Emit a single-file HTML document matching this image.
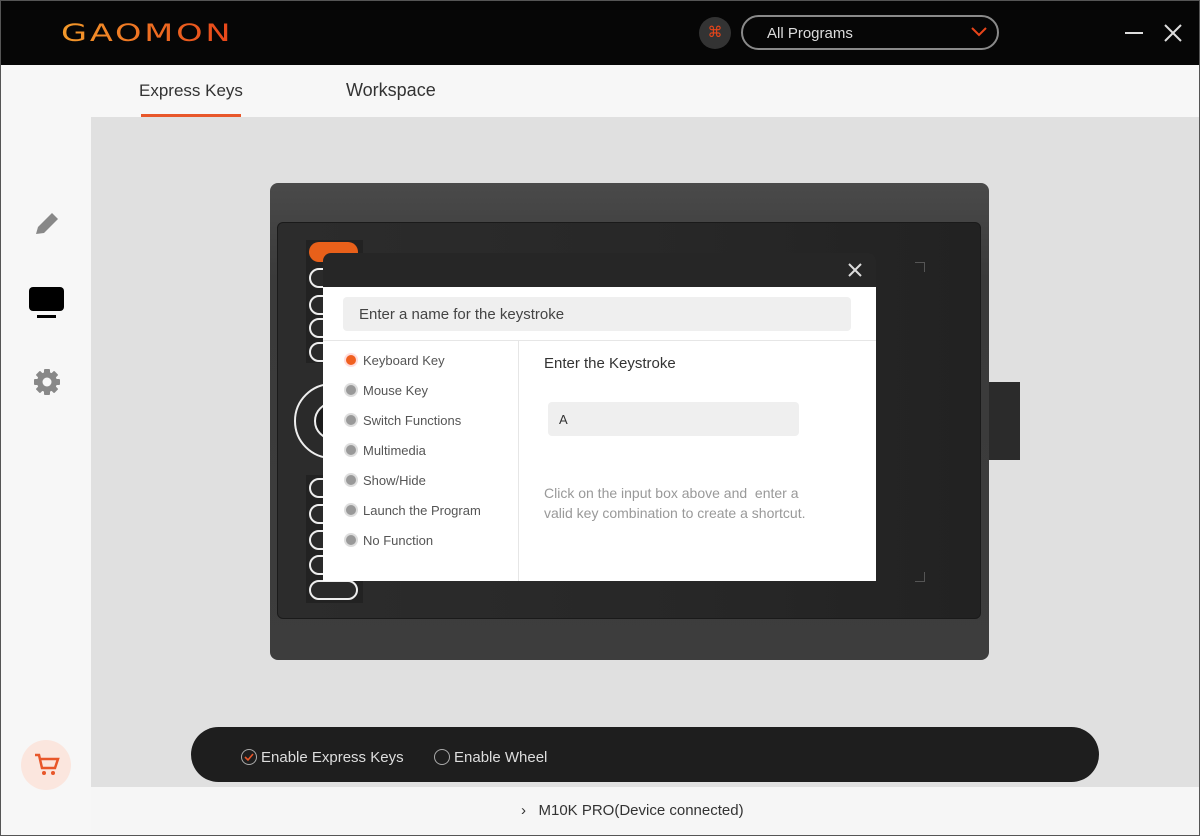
<!DOCTYPE html>
<html><head><meta charset="utf-8"><style>
*{margin:0;padding:0;box-sizing:border-box}
body{width:1200px;height:836px;overflow:hidden;font-family:"Liberation Sans",sans-serif;background:#f7f7f7;position:relative}
.a{position:absolute}
.top{left:0;top:0;width:1200px;height:65px;background:#060606}
.main{left:91px;top:117px;width:1109px;height:670px;background:#e0e0e0}
.status{left:91px;top:787px;width:1109px;height:49px;background:#f6f6f6;font-size:15px;color:#333}
.key{position:absolute;left:309px;width:49px;height:20px;border:2px solid #eee;border-radius:10px;background:#2a2a2a}
.radio{position:absolute;left:344px;width:14px;height:14px;border-radius:50%;background:#999;border:2px solid #ddd}
.lbl{position:absolute;left:363px;font-size:13px;color:#555}
</style></head><body>
<div class="a top"></div>
<div class="a" style="left:61px;top:19px;font-size:24px;letter-spacing:2px;background:linear-gradient(90deg,#f39a2a,#e8451a);-webkit-background-clip:text;color:transparent;font-family:'DejaVu Sans',sans-serif;transform:scaleX(1.4);transform-origin:left">GAOMON</div>
<div class="a" style="left:699px;top:17px;width:32px;height:32px;border-radius:50%;background:#333;color:#e8451a;font-size:15px;text-align:center;line-height:32px">⌘</div>
<div class="a" style="left:741px;top:15px;width:258px;height:35px;border:2px solid #8a8a8a;border-radius:18px;color:#ddd;font-size:15px;padding:8px 0 0 24px">All Programs</div>
<svg class="a" style="left:970px;top:26px" width="18" height="12"><path d="M2 2 L9 9 L16 2" stroke="#e8451a" stroke-width="2" fill="none"/></svg>
<div class="a" style="left:1125px;top:32px;width:18px;height:2px;background:#ddd"></div>
<svg class="a" style="left:1163px;top:23px" width="20" height="20"><path d="M2 2L18 18M18 2L2 18" stroke="#ddd" stroke-width="2"/></svg>
<div class="a" style="left:139px;top:81px;font-size:17px;color:#333">Express Keys</div>
<div class="a" style="left:141px;top:114px;width:100px;height:3px;background:#e8572a"></div>
<div class="a" style="left:346px;top:80px;font-size:18px;color:#333">Workspace</div>
<div class="a main"></div>
<svg class="a" style="left:32px;top:208px" width="30" height="30"><path d="M4 26 L6 19 L20 5 L26 11 L12 25 Z" fill="#888"/></svg>
<div class="a" style="left:29px;top:287px;width:35px;height:24px;background:#000;border-radius:4px"></div>
<div class="a" style="left:37px;top:315px;width:19px;height:3px;background:#000"></div>
<svg class="a" style="left:33px;top:368px" width="28" height="28" viewBox="0 0 28 28"><g fill="#888"><circle cx="14" cy="14" r="10"/><rect x="11" y="1" width="6" height="26" rx="1"/><rect x="1" y="11" width="26" height="6" rx="1"/><rect x="11" y="1" width="6" height="26" rx="1" transform="rotate(45 14 14)"/><rect x="11" y="1" width="6" height="26" rx="1" transform="rotate(-45 14 14)"/></g><circle cx="14" cy="14" r="4.5" fill="#f7f7f7"/></svg>
<div class="a" style="left:21px;top:740px;width:50px;height:50px;border-radius:50%;background:#fbe6de"></div>
<svg class="a" style="left:33px;top:752px" width="28" height="26"><path d="M2 3h4l3 13h13l3-9H8" stroke="#e8572a" stroke-width="2.5" fill="none"/><circle cx="11" cy="21" r="2" fill="#e8572a"/><circle cx="20" cy="21" r="2" fill="#e8572a"/></svg>
<div class="a" style="left:270px;top:183px;width:719px;height:477px;border-radius:8px;background:linear-gradient(#4a4a4a,#3a3a3a 20%,#3d3d3d)"></div>
<div class="a" style="left:277px;top:222px;width:704px;height:397px;border-radius:6px;background:linear-gradient(90deg,#2c2c2c,#272727 60%,#222);border:1px solid #1a1a1a"></div>
<div class="a" style="left:989px;top:382px;width:31px;height:78px;background:#2b2b2b"></div>
<div class="a" style="left:306px;top:240px;width:57px;height:123px;background:#222"></div>
<div class="a" style="left:306px;top:475px;width:57px;height:128px;background:#222"></div>
<div class="a" style="left:309px;top:242px;width:49px;height:20px;border-radius:10px;background:#e8601a"></div>
<div class="key" style="top:268px"></div><div class="key" style="top:295px"></div><div class="key" style="top:318px"></div><div class="key" style="top:342px"></div>
<div class="key" style="top:478px"></div><div class="key" style="top:504px"></div><div class="key" style="top:530px"></div><div class="key" style="top:555px"></div><div class="key" style="top:580px"></div>
<div class="a" style="left:294px;top:383px;width:76px;height:76px;border-radius:50%;border:2px solid #eee;background:#2a2a2a"></div>
<div class="a" style="left:314px;top:402px;width:38px;height:38px;border-radius:50%;border:2px solid #eee;background:#1c1c1c"></div>
<div class="a" style="left:915px;top:262px;width:10px;height:10px;border-top:1px solid #555;border-right:1px solid #555"></div>
<div class="a" style="left:915px;top:572px;width:10px;height:10px;border-bottom:1px solid #555;border-right:1px solid #555"></div>
<div class="a" style="left:323px;top:253px;width:553px;height:36px;background:#262626;border-radius:8px 8px 0 0"></div>
<svg class="a" style="left:847px;top:262px" width="16" height="16"><path d="M2 2L14 14M14 2L2 14" stroke="#ddd" stroke-width="2"/></svg>
<div class="a" style="left:323px;top:287px;width:553px;height:294px;background:#fff"></div>
<div class="a" style="left:343px;top:297px;width:508px;height:34px;background:#efefef;border-radius:4px;font-size:15px;color:#444;padding:9px 0 0 16px">Enter a name for the keystroke</div>
<div class="a" style="left:323px;top:340px;width:553px;height:1px;background:#e6e6e6"></div>
<div class="a" style="left:518px;top:341px;width:1px;height:240px;background:#e6e6e6"></div>
<div class="radio" style="top:353px;background:#f06020;border-color:#fdd"></div><div class="lbl" style="top:353px">Keyboard Key</div>
<div class="radio" style="top:383px"></div><div class="lbl" style="top:383px">Mouse Key</div>
<div class="radio" style="top:413px"></div><div class="lbl" style="top:413px">Switch Functions</div>
<div class="radio" style="top:443px"></div><div class="lbl" style="top:443px">Multimedia</div>
<div class="radio" style="top:473px"></div><div class="lbl" style="top:473px">Show/Hide</div>
<div class="radio" style="top:503px"></div><div class="lbl" style="top:503px">Launch the Program</div>
<div class="radio" style="top:533px"></div><div class="lbl" style="top:533px">No Function</div>
<div class="a" style="left:544px;top:355px;font-size:15px;color:#333">Enter the Keystroke</div>
<div class="a" style="left:548px;top:402px;width:251px;height:34px;background:#efefef;border-radius:4px;font-size:13px;color:#333;padding:10px 0 0 11px">A</div>
<div class="a" style="left:544px;top:483px;font-size:14px;color:#999;line-height:20px">Click on the input box above and&nbsp; enter a<br>valid key combination to create a shortcut.</div>
<div class="a" style="left:191px;top:727px;width:908px;height:55px;background:#1e1e1e;border-radius:28px"></div>
<div class="a" style="left:241px;top:749px;width:16px;height:16px;border:1px solid #aaa;border-radius:50%"></div>
<svg class="a" style="left:243px;top:751px" width="12" height="12"><path d="M2 6L5 9L10 3" stroke="#e8572a" stroke-width="1.6" fill="none"/></svg>
<div class="a" style="left:261px;top:749px;font-size:15px;color:#ddd">Enable Express Keys</div>
<div class="a" style="left:434px;top:749px;width:16px;height:16px;border:1px solid #aaa;border-radius:50%"></div>
<div class="a" style="left:454px;top:749px;font-size:15px;color:#ddd">Enable Wheel</div>
<div class="a status"><span style="position:absolute;left:430px;top:15px">›&nbsp;&nbsp; M10K PRO(Device connected)</span></div>
<div class="a" style="left:0;top:0;width:1200px;height:836px;border:1px solid #555;pointer-events:none"></div>
</body></html>
